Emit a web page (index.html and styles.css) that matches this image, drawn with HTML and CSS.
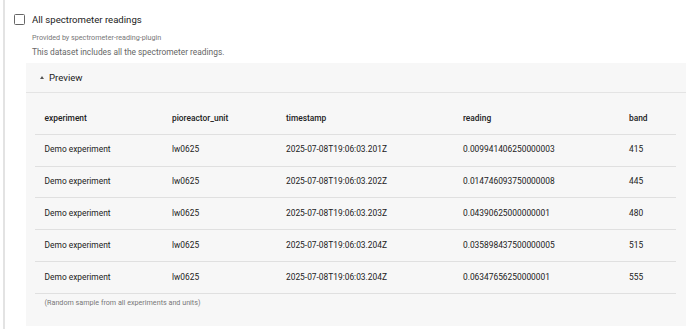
FILE: index.html
```html
<!DOCTYPE html>
<html>
<head>
<meta charset="utf-8">
<link rel="stylesheet" href="styles.css">
</head>
<body>
<div class="dataset">
  <div class="title-row">
    <span class="checkbox"></span>
    <span class="title">All spectrometer readings</span>
  </div>
  <div class="meta">
    <div class="provided">Provided by spectrometer-reading-plugin</div>
    <div class="desc">This dataset includes all the spectrometer readings.</div>
  </div>
  <div class="panel">
    <div class="panel-head">
      <span class="arrow"></span>
      <span class="panel-title">Preview</span>
    </div>
    <div class="panel-body">
      <table class="preview">
        <colgroup>
          <col class="c1"><col class="c2"><col class="c3"><col class="c4"><col class="c5">
        </colgroup>
        <thead>
          <tr><th>experiment</th><th>pioreactor_unit</th><th>timestamp</th><th>reading</th><th>band</th></tr>
        </thead>
        <tbody>
          <tr><td>Demo experiment</td><td>lw0625</td><td>2025-07-08T19:06:03.201Z</td><td>0.009941406250000003</td><td>415</td></tr>
          <tr><td>Demo experiment</td><td>lw0625</td><td>2025-07-08T19:06:03.202Z</td><td>0.014746093750000008</td><td>445</td></tr>
          <tr><td>Demo experiment</td><td>lw0625</td><td>2025-07-08T19:06:03.203Z</td><td>0.04390625000000001</td><td>480</td></tr>
          <tr><td>Demo experiment</td><td>lw0625</td><td>2025-07-08T19:06:03.204Z</td><td>0.035898437500000005</td><td>515</td></tr>
          <tr><td>Demo experiment</td><td>lw0625</td><td>2025-07-08T19:06:03.204Z</td><td>0.06347656250000001</td><td>555</td></tr>
        </tbody>
      </table>
      <div class="footnote">(Random sample from all experiments and units)</div>
    </div>
  </div>
</div>
</body>
</html>
```
FILE: styles.css
```css
html, body {
  margin: 0;
  padding: 0;
  background: #ffffff;
}
body {
  font-family: Roboto, "Liberation Sans", sans-serif;
  color: rgba(0, 0, 0, 0.87);
}
.dataset {
  margin-left: 3px;
  border-left: 2px solid #e3e3e3;
  padding: 14px 4px 3px 9px;
}
.title-row {
  display: flex;
  align-items: center;
  gap: 7px;
  height: 11px;
}
.checkbox {
  width: 11px;
  height: 11px;
  box-sizing: border-box;
  border: 1.5px solid #666;
  border-radius: 1.5px;
  flex: none;
}
.title {
  font-size: 9.6px;
  line-height: 11px;
  color: #222;
}
.meta {
  margin-left: 18px;
}
.provided {
  margin-top: 7px;
  font-size: 7.2px;
  line-height: 11px;
  color: #777;
}
.desc {
  margin-top: 4px;
  font-size: 8.4px;
  line-height: 11px;
  color: #666;
}
.panel {
  margin-top: 5px;
  margin-left: 12px;
  background: #f7f7f7;
}
.panel-head {
  height: 29px;
  border-bottom: 1px solid #e4e4e4;
  display: flex;
  align-items: center;
  padding-left: 14px;
  gap: 5px;
}
.arrow {
  width: 0;
  height: 0;
  border-left: 2.5px solid transparent;
  border-right: 2.5px solid transparent;
  border-bottom: 3px solid #555;
  margin-bottom: 1px;
}
.panel-title {
  font-size: 9.6px;
  line-height: 11px;
  color: #222;
}
.panel-body {
  padding: 10px 10px 19px 9px;
}
.preview {
  width: 100%;
  border-collapse: collapse;
  table-layout: fixed;
  font-size: 8.4px;
}
.c1 { width: 127.4px; }
.c2 { width: 114px; }
.c3 { width: 177px; }
.c4 { width: 166px; }
.preview th,
.preview td {
  text-align: left;
  padding: 9.7px 9.6px;
  line-height: 11.4px;
  border-bottom: 1px solid #e0e0e0;
  white-space: nowrap;
  color: #222;
}
.preview th {
  font-weight: 500;
}
.footnote {
  padding: 4.5px 9.6px 0;
  font-size: 7.2px;
  line-height: 9px;
  color: #777;
}
```
